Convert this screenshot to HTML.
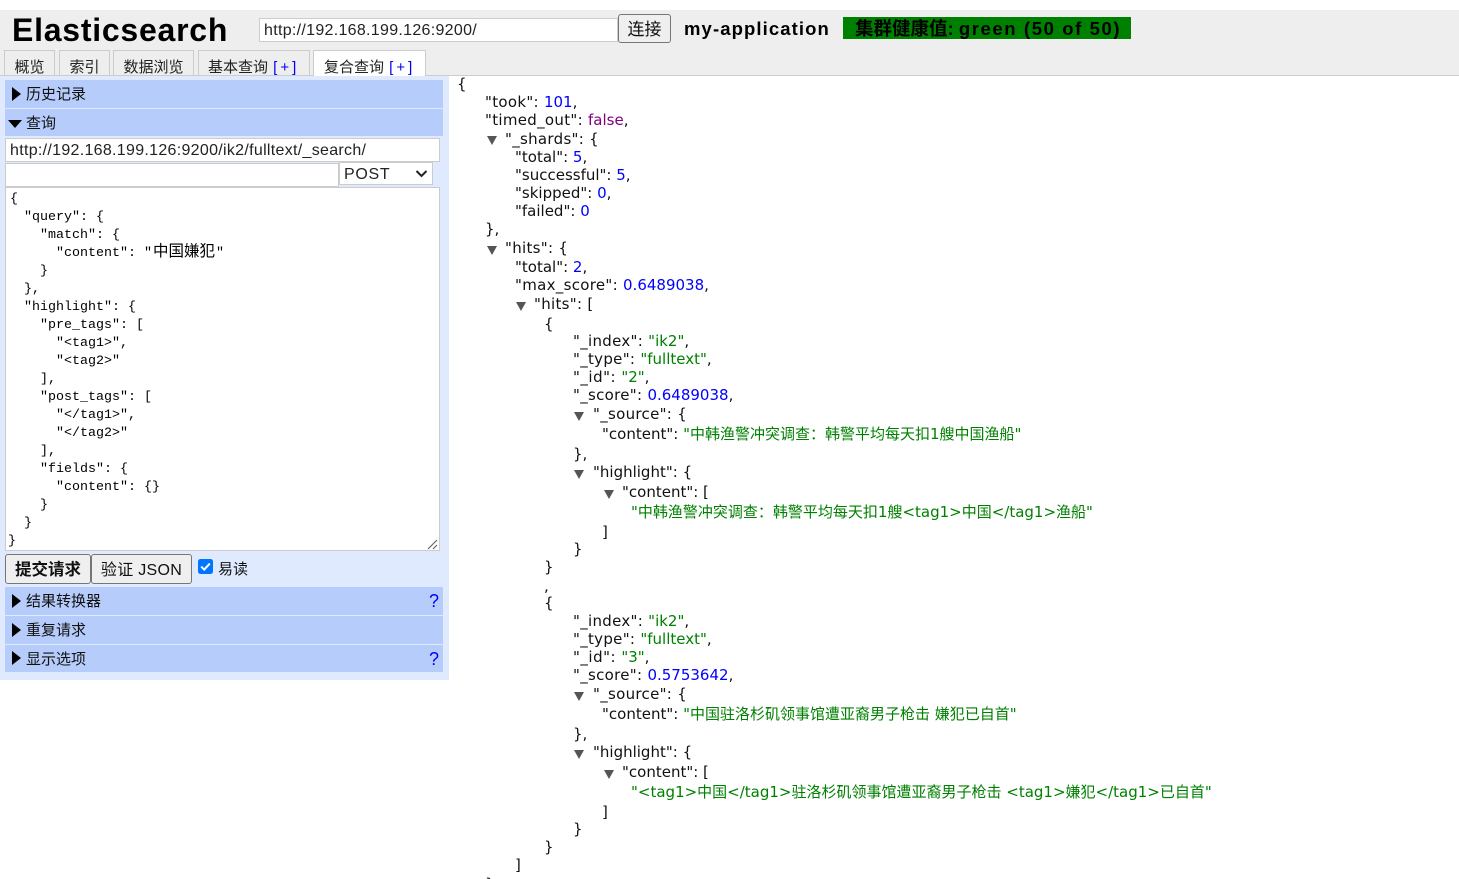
<!DOCTYPE html>
<html><head><meta charset="utf-8"><title>Elasticsearch</title>
<style>
html,body{margin:0;padding:0;width:1459px;height:879px;overflow:hidden;background:#fff;color:#000;font-family:"Liberation Sans","Noto Sans CJK SC",sans-serif;}
div,span.a{box-sizing:border-box}
.a{position:absolute}
.wrap{position:absolute;left:0;top:0;width:1459px;height:879px;overflow:hidden}
.l{position:absolute;white-space:pre;font-family:"DejaVu Sans","Noto Sans CJK SC",sans-serif;font-size:15px;line-height:18px;color:#111}
.w{letter-spacing:.3px}.w2{letter-spacing:.5px}
.n{color:#00f;letter-spacing:0}.s{color:#008000;letter-spacing:0}.b{color:#800080;letter-spacing:0}
.t{position:absolute;width:0;height:0;border-left:5px solid transparent;border-right:5px solid transparent;border-top:9px solid #555}
.tab{position:absolute;top:50px;height:25px;border:1px solid #ccc;border-bottom:0;background:#eee;overflow:hidden;font-size:15px;line-height:33px;text-align:center;color:#222;white-space:pre}
.tab span{color:#00f;letter-spacing:3px;margin-left:1px}
.tp{text-align:left;padding-left:9px}
.bar{position:absolute;left:5px;width:438px;background:#b6cdfc;font-size:15px;color:#111}
.bar span{position:absolute;left:21px;top:50%;margin-top:-9px;line-height:20px;white-space:pre}
.bar i{position:absolute;font-style:normal;color:#00f;font-size:18px;right:4px;top:50%;margin-top:-10px;line-height:20px}
.r{position:absolute;left:7px;top:50%;margin-top:-7.5px;width:0;height:0;border-top:7.5px solid transparent;border-bottom:7.5px solid transparent;border-left:9px solid #000}
.box{position:absolute;background:#fff;border:1px solid #ccc}
.u{font-size:16px;line-height:24px;padding-left:4px;color:#222;white-space:pre;letter-spacing:.3px}
pre{position:absolute;margin:0;left:8px;top:191px;font:13.33px/18px "Liberation Mono","Noto Sans CJK SC",monospace;color:#000}
pre b{font:15.5px/1px "Noto Sans CJK SC",sans-serif;margin:0 1px}
.btn{position:absolute;background:#efefef;border:1px solid #767676;border-radius:3px;text-align:center;color:#111;font-size:16px}
</style></head><body>
<div class="a" style="left:0;top:10px;width:1459px;height:66px;background:#eee;border-bottom:1px solid #ccc"></div>
<div class="a" style="left:12px;top:10px;line-height:40px;font-size:32px;font-weight:bold;color:#000;white-space:pre;letter-spacing:.75px">Elasticsearch</div>
<div class="box u" style="left:259px;top:18px;width:359px;height:24px">http://192.168.199.126:9200/</div>
<div class="btn" style="left:618px;top:14px;width:53px;height:29px;line-height:30px;font-size:17px">连接</div>
<div class="a" style="left:684px;top:18px;line-height:22px;font-size:18.5px;font-weight:bold;white-space:pre;letter-spacing:1.1px">my-application</div>
<div class="a" style="left:843px;top:17px;width:288px;height:22px;background:#008000;font-size:18.5px;font-weight:bold;line-height:23px;padding-left:12px;white-space:pre;color:#000">集群健康值: <span style="letter-spacing:1.6px">green (50 of 50)</span></div>
<div class="tab" style="left:4px;width:51px">概览</div>
<div class="tab" style="left:59px;width:51px">索引</div>
<div class="tab" style="left:113px;width:81px">数据浏览</div>
<div class="tab tp" style="left:198px;width:112px">基本查询 <span>[+]</span></div>
<div class="tab tp" style="left:313px;width:113px;height:26px;background:#fff;z-index:2;padding-left:10px">复合查询 <span>[+]</span></div>

<div class="a" style="left:0;top:76px;width:449px;height:604px;background:#dfeaff"></div>
<div class="bar" style="top:80px;height:28px"><u class="r"></u><span>历史记录</span></div>
<div class="bar" style="top:109px;height:27px"><u class="a" style="left:3px;top:11px;width:0;height:0;border-left:7.5px solid transparent;border-right:7.5px solid transparent;border-top:8px solid #000"></u><span>查询</span></div>
<div class="box u" style="left:5px;top:138px;width:435px;height:24px">http://192.168.199.126:9200/ik2/fulltext/_search/</div>
<div class="box" style="left:5px;top:163px;width:334px;height:24px"></div>
<div class="box u" style="left:339px;top:162px;width:94px;height:23px;line-height:23px;letter-spacing:.7px">POST<svg class="a" style="left:75px;top:6px" width="13" height="10" viewBox="0 0 13 10"><path d="M1.5 2 L6.5 7 L11.5 2" fill="none" stroke="#222" stroke-width="2"/></svg></div>
<div class="box" style="left:5px;top:187px;width:435px;height:364px"></div>
<pre><span style="margin-left:2px">{</span>
  "query": {
    "match": {
      "content": "<b>中国嫌犯</b>"
    }
  },
  "highlight": {
    "pre_tags": [
      "&lt;tag1&gt;",
      "&lt;tag2&gt;"
    ],
    "post_tags": [
      "&lt;/tag1&gt;",
      "&lt;/tag2&gt;"
    ],
    "fields": {
      "content": {}
    }
  }
}</pre>
<svg class="a" style="left:427px;top:539px" width="11" height="11" viewBox="0 0 11 11"><path d="M1 10 L10 1 M6 10 L10 6" stroke="#666" stroke-width="1.2" fill="none"/></svg>
<div class="btn" style="left:5px;top:554px;width:86px;height:30px;line-height:31px;font-weight:bold;font-size:16.5px">提交请求</div>
<div class="btn" style="left:91px;top:554px;width:101px;height:30px;line-height:31px;letter-spacing:.3px">验证 JSON</div>
<svg class="a" style="left:198px;top:559px" width="15" height="15" viewBox="0 0 15 15"><rect width="15" height="15" rx="2.5" fill="#0075ff"/><path d="M3.2 7.6 L6.2 10.6 L11.8 4.6" fill="none" stroke="#fff" stroke-width="2"/></svg>
<div class="a" style="left:218px;top:561px;line-height:18px;font-size:15px;color:#111">易读</div>
<div class="bar" style="top:587px;height:28px"><u class="r"></u><span>结果转换器</span><i>?</i></div>
<div class="bar" style="top:616px;height:28px"><u class="r"></u><span>重复请求</span></div>
<div class="bar" style="top:645px;height:27px"><u class="r"></u><span>显示选项</span><i>?</i></div>

<div class="wrap">
<div class="l" style="left:457px;top:75px">{</div>
<div class="l w" style="left:485px;top:93px">"took": <span class="n">101</span>,</div>
<div class="l w" style="left:485px;top:111px">"timed_out": <span class="b">false</span>,</div>
<u class="t" style="left:487px;top:136px"></u><div class="l w" style="left:505px;top:130px">"_shards": {</div>
<div class="l" style="left:515px;top:148px">"total": <span class="n">5</span>,</div>
<div class="l" style="left:515px;top:166px">"successful": <span class="n">5</span>,</div>
<div class="l" style="left:515px;top:184px">"skipped": <span class="n">0</span>,</div>
<div class="l" style="left:515px;top:202px">"failed": <span class="n">0</span></div>
<div class="l" style="left:485px;top:220px">},</div>
<u class="t" style="left:487px;top:246px"></u><div class="l w" style="left:505px;top:239px">"hits": {</div>
<div class="l" style="left:515px;top:258px">"total": <span class="n">2</span>,</div>
<div class="l w" style="left:515px;top:276px">"max_score": <span class="n">0.6489038</span>,</div>
<u class="t" style="left:516px;top:302px"></u><div class="l w" style="left:534px;top:295px">"hits": [</div>
<div class="l" style="left:544px;top:315px">{</div>
<div class="l w" style="left:573px;top:332px">"_index": <span class="s">"ik2"</span>,</div>
<div class="l w" style="left:573px;top:350px">"_type": <span class="s">"fulltext"</span>,</div>
<div class="l w2" style="left:573px;top:368px">"_id": <span class="s">"2"</span>,</div>
<div class="l w" style="left:573px;top:386px">"_score": <span class="n">0.6489038</span>,</div>
<u class="t" style="left:574px;top:412px"></u><div class="l w" style="left:593px;top:405px">"_source": {</div>
<div class="l" style="left:602px;top:425px">"content": <span class="s">"中韩渔警冲突调查：韩警平均每天扣1艘中国渔船"</span></div>
<div class="l" style="left:573px;top:445px">},</div>
<u class="t" style="left:574px;top:470px"></u><div class="l" style="left:593px;top:463px">"highlight": {</div>
<u class="t" style="left:604px;top:490px"></u><div class="l" style="left:622px;top:483px">"content": [</div>
<div class="l s" style="left:631px;top:503px;color:#008000">"中韩渔警冲突调查：韩警平均每天扣1艘&lt;tag1&gt;中国&lt;/tag1&gt;渔船"</div>
<div class="l" style="left:602px;top:523px">]</div>
<div class="l" style="left:573px;top:540px">}</div>
<div class="l" style="left:544px;top:558px">}</div>
<div class="l" style="left:544px;top:577px">,</div>
<div class="l" style="left:544px;top:594px">{</div>
<div class="l w" style="left:573px;top:612px">"_index": <span class="s">"ik2"</span>,</div>
<div class="l w" style="left:573px;top:630px">"_type": <span class="s">"fulltext"</span>,</div>
<div class="l w2" style="left:573px;top:648px">"_id": <span class="s">"3"</span>,</div>
<div class="l w" style="left:573px;top:666px">"_score": <span class="n">0.5753642</span>,</div>
<u class="t" style="left:574px;top:692px"></u><div class="l w" style="left:593px;top:685px">"_source": {</div>
<div class="l" style="left:602px;top:705px">"content": <span class="s">"中国驻洛杉矶领事馆遭亚裔男子枪击 嫌犯已自首"</span></div>
<div class="l" style="left:573px;top:725px">},</div>
<u class="t" style="left:574px;top:750px"></u><div class="l" style="left:593px;top:743px">"highlight": {</div>
<u class="t" style="left:604px;top:770px"></u><div class="l" style="left:622px;top:763px">"content": [</div>
<div class="l s" style="left:631px;top:783px;color:#008000">"&lt;tag1&gt;中国&lt;/tag1&gt;驻洛杉矶领事馆遭亚裔男子枪击 &lt;tag1&gt;嫌犯&lt;/tag1&gt;已自首"</div>
<div class="l" style="left:602px;top:803px">]</div>
<div class="l" style="left:573px;top:820px">}</div>
<div class="l" style="left:544px;top:838px">}</div>
<div class="l" style="left:515px;top:856px">]</div>
<div class="l" style="left:485px;top:875px">}</div>
</div>
</body></html>
